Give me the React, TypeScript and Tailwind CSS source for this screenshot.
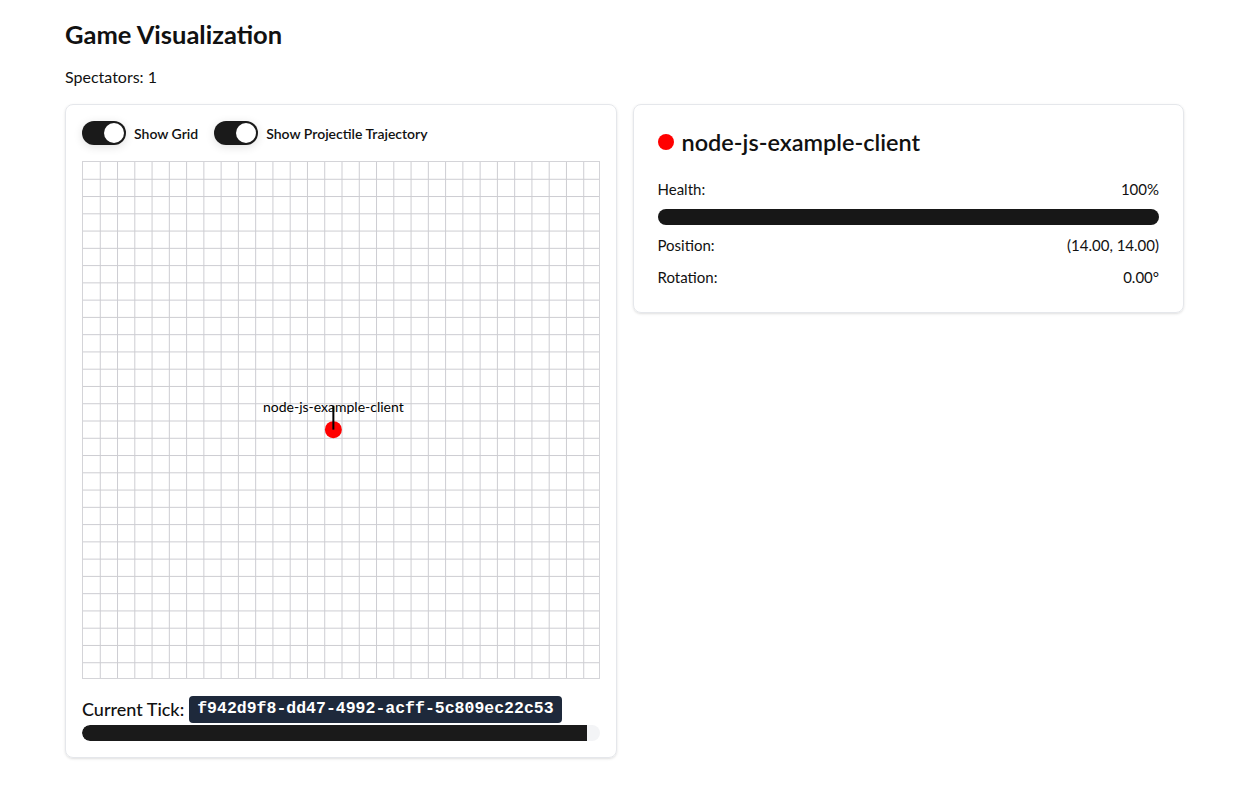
import React, { useState } from 'react';

const GRID = 30;

const Toggle = ({ on, onChange, label }: { on: boolean; onChange: () => void; label: string }) => (
  <label className="flex items-center gap-2 cursor-pointer">
    <button
      onClick={onChange}
      className={`relative w-[44px] h-[24px] rounded-full shadow-[0_2px_10px_rgba(0,0,0,0.12)] ${on ? 'bg-[#1a1a1a]' : 'bg-gray-300'}`}
    >
      <span
        className={`absolute top-[2px] w-[20px] h-[20px] rounded-full bg-white ${on ? 'left-[22px]' : 'left-[2px]'}`}
      />
    </button>
    <span className="text-[14px] font-semibold text-[#111]">{label}</span>
  </label>
);

const Arena = ({ showGrid }: { showGrid: boolean }) => {
  const size = 518;
  const cell = size / GRID;
  const px = 14;
  const py = 14;
  const cx = (px + 0.5) * cell;
  const cy = (GRID - py - 0.5) * cell;
  const lines = [];
  for (let i = 1; i < GRID; i++) {
    lines.push(<line key={'v' + i} x1={i * cell} y1={0} x2={i * cell} y2={size} stroke="#cdcdd2" strokeWidth={1} />);
    lines.push(<line key={'h' + i} x1={0} y1={i * cell} x2={size} y2={i * cell} stroke="#cdcdd2" strokeWidth={1} />);
  }
  return (
    <svg width={size} height={size} className="block border border-[#d4d4d8]">
      {showGrid && lines}
      <circle cx={cx} cy={cy} r={8.5} fill="#ff0000" />
      <line x1={cx} y1={cy} x2={cx} y2={cy - 24} stroke="#000" strokeWidth={2} />
      <text x={cx} y={cy - 18} textAnchor="middle" fontSize={14} fill="#000" fontFamily="Lato, 'Liberation Sans', sans-serif">
        node-js-example-client
      </text>
    </svg>
  );
};

const Row = ({ k, v }: { k: string; v: string }) => (
  <div className="flex justify-between text-[15px] text-[#111]">
    <span>{k}</span>
    <span>{v}</span>
  </div>
);

export default function App() {
  const [showGrid, setShowGrid] = useState(true);
  const [showTraj, setShowTraj] = useState(true);

  return (
    <div className="min-h-screen bg-white text-[#111] font-['Lato','Liberation_Sans',sans-serif]">
      <div className="ml-[65px] w-[1119px] pt-[18px]">
        <h1 className="text-[25.5px] font-bold leading-[32px]">Game Visualization</h1>
        <p className="mt-[17px] text-[16px] leading-[20px]">Spectators: 1</p>

        <div className="mt-[17px] grid grid-cols-2 gap-4 items-start">
          <div className="rounded-lg border border-[#e5e7eb] shadow-sm p-4">
            <div className="flex items-center gap-4">
              <Toggle on={showGrid} onChange={() => setShowGrid(!showGrid)} label="Show Grid" />
              <Toggle on={showTraj} onChange={() => setShowTraj(!showTraj)} label="Show Projectile Trajectory" />
            </div>
            <div className="mt-[16px]">
              <Arena showGrid={showGrid} />
            </div>
            <div className="mt-[17px] flex items-center gap-[5px]">
              <span className="text-[18px] font-medium leading-[24px]">Current Tick:</span>
              <code className="bg-[#1e293b] text-white rounded px-[8px] py-[1px] text-[16.5px] font-bold font-['Liberation_Mono',monospace]">
                f942d9f8-dd47-4992-acff-5c809ec22c53
              </code>
            </div>
            <div className="mt-[2px] h-[16px] rounded-full bg-[#f3f4f6] overflow-hidden">
              <div className="h-full bg-[#1a1a1a] rounded-l-full" style={{ width: '97.5%' }} />
            </div>
          </div>

          <div className="rounded-lg border border-[#e5e7eb] shadow-sm px-6 pt-[23px] pb-[23px]">
            <div className="flex items-center gap-[8px]">
              <span className="w-[16px] h-[16px] rounded-full bg-[#ff0000]" />
              <h2 className="text-[23.5px] font-semibold leading-[28px]">node-js-example-client</h2>
            </div>
            <div className="mt-[22px] flex flex-col">
              <Row k="Health:" v="100%" />
              <div className="mt-[8px] h-[16px] rounded-full bg-[#171717]" />
              <div className="mt-[9px]"><Row k="Position:" v="(14.00, 14.00)" /></div>
              <div className="mt-[10px]"><Row k="Rotation:" v="0.00°" /></div>
            </div>
          </div>
        </div>
      </div>
    </div>
  );
}
